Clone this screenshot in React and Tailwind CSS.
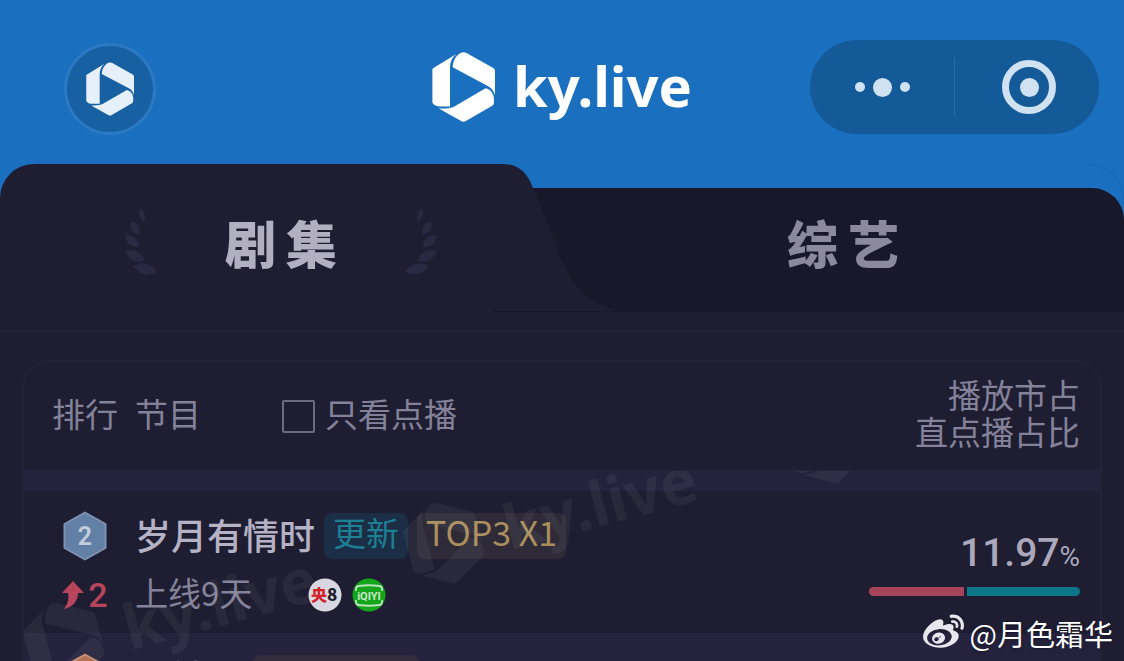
import { useState } from 'react';
import { FaWeibo } from 'react-icons/fa';

const shows = [
  {
    rank: 2,
    title: '岁月有情时',
    tags: [
      { text: '更新', style: 'bg-[#1c2d46] text-[33px] text-[#1d7f92]' },
      { text: 'TOP3 X1', style: 'bg-[#2e2a38] text-[34px] text-[#a98d5c]' },
    ],
    change: 2,
    days: '上线9天',
    share: '11.97',
    live: 45,
  },
  {
    rank: 3,
    title: '六姊妹',
    tags: [{ text: 'TOP1 X12', style: 'bg-[#322c3b] text-[34px] text-[#a98d5c]' }],
    change: 1,
    days: '上线8天',
    share: '10.02',
    live: 60,
  },
];

const LogoMark = ({ className }) => (
  <svg viewBox="0 0 186 207" className={className} fill="currentColor" aria-hidden="true">
    <path d="M4 47 L72 6 C60 15 54 28 53 44 V161 H24 C14 161 6 158 1 150 V52 Q1 49 4 47Z" />
    <path d="M84 3 Q93 -2 102 3 L181 47 Q186 50 186 56 V128 C183 115 177 107 166 101 L61 45 C62 27 70 11 84 3Z" />
    <path d="M158 107 C173 110 182 122 183 138 V150 Q183 156 178 159 L100 204 Q93 208 86 204 L20 167 C42 168 56 166 66 161Z" />
  </svg>
);

const Laurel = ({ className }) => (
  <svg viewBox="0 0 32 68" className={className} fill="#2a2943" aria-hidden="true">
    <path d="M0 -7 Q6 0 0 7 Q-6 0 0 -7Z" transform="translate(18 7) rotate(-16)" />
    <path d="M0 -8 Q8 0 0 8 Q-8 0 0 -8Z" transform="translate(11 20) rotate(-32)" />
    <path d="M0 -9 Q9 0 0 9 Q-9 0 0 -9Z" transform="translate(8 33) rotate(-52)" />
    <path d="M0 -11 Q10 0 0 11 Q-10 0 0 -11Z" transform="translate(11 48) rotate(-64)" />
    <path d="M0 -12 Q11 0 0 12 Q-11 0 0 -12Z" transform="translate(21 61) rotate(-76)" />
  </svg>
);

const TabTitle = ({ text }) => (
  <span className="flex gap-2.5 text-[51px] leading-[60px] font-black">
    {text.split('').map((c) => (
      <span key={c}>{c}</span>
    ))}
  </span>
);

const RankBadge = ({ rank }) => (
  <svg viewBox="0 0 44 50" className="mx-auto h-[50px] w-11" role="img" aria-label={`第${rank}名`}>
    <path
      d="M22 1.5 L42.5 13 V37 L22 48.5 L1.5 37 V13Z"
      fill={rank === 2 ? '#627fa6' : '#b0694a'}
      stroke={rank === 2 ? '#7f92b2' : '#c08a70'}
      strokeWidth="2"
      strokeLinejoin="round"
    />
    <text x="22" y="34" textAnchor="middle" fontSize="25" fontWeight="600" fill="#c3cddd" className="font-['Roboto',sans-serif]">
      {rank}
    </text>
  </svg>
);

const Watermark = ({ className }) => (
  <div className={`absolute flex origin-left -rotate-15 items-center gap-6 text-white/5 ${className}`}>
    <LogoMark className="h-[84px] w-[75px]" />
    <span className="font-['Noto_Sans',sans-serif] text-[62px] leading-[84px] font-bold">ky.live</span>
  </div>
);

const Channels = () => (
  <span className="flex gap-2.5">
    <svg viewBox="0 0 34 34" className="size-[34px]" role="img" aria-label="央8">
      <circle cx="17" cy="17" r="16.5" fill="#d9d7e0" />
      <text x="3" y="23" fontSize="16" fontWeight="900" fill="#d2232c">央</text>
      <text x="19" y="23" fontSize="17" fontWeight="900" fill="#211f2c">8</text>
    </svg>
    <svg viewBox="0 0 34 34" className="size-[34px]" role="img" aria-label="iQIYI">
      <circle cx="17" cy="17" r="16.5" fill="#14a51a" />
      <path d="M4 13 V11 Q4 8 7 8 Q17 6.5 27 8 Q30 8 30 11 V13 M4 22 V24 Q4 27 7 27 Q17 28.5 27 27 Q30 27 30 24 V22" fill="none" stroke="#b9e2bd" strokeWidth="1.8" />
      <text x="17" y="22" textAnchor="middle" fontSize="11" fontWeight="700" fill="#c9e8cc" className="font-['Roboto',sans-serif]">
        iQIYI
      </text>
    </svg>
  </span>
);

const ShowRow = ({ show, striped }) => (
  <tr className={striped ? 'bg-[#25223d] align-top' : 'align-top'}>
    <td className="pt-5 pb-5 pl-[11px]">
      <RankBadge rank={show.rank} />
      <div className="mt-4 flex items-center justify-center gap-1 font-['Roboto',sans-serif] text-[34px] leading-9 font-medium text-[#b8455c]">
        <svg viewBox="0 0 22 28" className="h-7 w-[22px]" fill="currentColor" aria-hidden="true">
          <path d="M11 0 L22 12 H16 C16 20 11 26 2 28 C6 23 7 18 6 12 H0Z" />
        </svg>
        {show.change}
      </div>
    </td>
    <td className="pt-[22px] pb-5">
      <div className="flex h-[46px] gap-[9px]">
        <span className="text-[36px] leading-[42px] font-medium whitespace-nowrap text-[#b4b2c4]">{show.title}</span>
        {show.tags.map((tag) => (
          <span key={tag.text} className={`h-[46px] rounded-lg px-[9px] leading-[38px] whitespace-nowrap ${tag.style}`}>
            {tag.text}
          </span>
        ))}
      </div>
      <div className="mt-[18px] flex h-9 items-center text-[33px] text-[#84829a]">
        <span className="w-[173px] pb-1.5 leading-9 whitespace-nowrap">{show.days}</span>
        <Channels />
      </div>
    </td>
    <td className="pt-10 pr-5">
      <div className="flex items-baseline justify-end font-['Roboto',sans-serif] text-[39px] leading-[44px] font-medium text-[#aaa8ba]">
        {show.share}
        <span className="text-[28px] font-normal">%</span>
      </div>
      <div className="mt-2 flex h-[9px] gap-[3px] overflow-hidden rounded-full">
        <span className="bg-[#a64459]" style={{ width: `${show.live}%` }} />
        <span className="flex-1 bg-[#0c7587]" />
      </div>
    </td>
  </tr>
);

const App = () => {
  const [tab, setTab] = useState('剧集');
  const [onDemand, setOnDemand] = useState(false);

  return (
    <div className="relative h-screen overflow-hidden bg-[#1f1d31] font-['Noto_Sans_CJK_SC',sans-serif]">
      <div className="bg-[#1a6fbf]">
        <header className="grid grid-cols-[1fr_auto_1fr] items-center pt-[39px] pb-[29px]">
          <button aria-label="首页" className="mt-1 ml-16 flex size-[92px] items-center justify-center rounded-full border-3 border-[#2a79c2] bg-[#1760a2] text-[#e6f0fa]">
            <LogoMark className="h-[54px] w-12" />
          </button>
          <div className="flex items-center gap-[18px] text-white">
            <LogoMark className="h-[70px] w-[63px]" />
            <span className="pb-1 font-['Noto_Sans',sans-serif] text-[56px] leading-[64px] font-bold">ky.live</span>
          </div>
          <div className="mr-[25px] flex h-[94px] w-[289px] items-center justify-self-end rounded-full bg-[#155a98] text-[#d0e1f2]">
            <button aria-label="更多" className="flex h-full w-36 items-center justify-center gap-2">
              <span className="size-2.5 rounded-full bg-current" />
              <span className="size-[19px] rounded-full bg-current" />
              <span className="size-2.5 rounded-full bg-current" />
            </button>
            <span className="h-[58px] w-px bg-[#2a6ba8]" />
            <button aria-label="关闭" className="flex h-full w-36 items-center justify-center pl-1">
              <span className="flex size-[54px] items-center justify-center rounded-full border-7 border-current">
                <span className="size-[19px] rounded-full bg-current" />
              </span>
            </button>
          </div>
        </header>

        <div className="relative">
          {/* tab shapes */}
          <div className="absolute inset-0 flex" aria-hidden="true">
            <span className="absolute top-0 right-0 size-9 rounded-tr-[36px] border-t border-r border-[#1967b2]" />
            <span className="flex-1 rounded-tl-[34px] bg-[#1f1d31]" />
            <svg viewBox="0 0 150 148" className="h-[148px] w-[150px]">
              <path d="M40 24 H150 V148 H40Z" fill="#19172a" />
              <path d="M0 0 H16 C32 0 41 10 46 24 L66 73 Q72 90 78 103 C90 129 112 145 140 148 H0Z" fill="#1f1d31" />
              <path d="M4 147.5 H150" stroke="#19172a" />
            </svg>
            <span className="relative mt-6 flex-1 rounded-tr-[32px] bg-[#19172a]" />
          </div>
          <div role="tablist" className="relative grid h-[148px] grid-cols-2">
            <button role="tab" aria-selected={tab === '剧集'} onClick={() => setTab('剧集')} className="flex items-center justify-center gap-[69px] pt-2 text-[#b1afc0]">
              <Laurel className="h-[68px] w-8" />
              <TabTitle text="剧集" />
              <Laurel className="h-[68px] w-8 -scale-x-100" />
            </button>
            <button role="tab" aria-selected={tab === '综艺'} onClick={() => setTab('综艺')} className="flex items-center justify-center pt-2 text-[#8b899b]">
              <TabTitle text="综艺" />
            </button>
          </div>
        </div>
      </div>

      <main className="mt-[18px] border-t-2 border-[#242238] px-[22px] pt-7">
        <div className="relative overflow-hidden rounded-t-[28px] border-2 border-[#242238]">
          <table className="w-full border-collapse">
            <thead>
              <tr className="h-[108px] text-[33px] leading-9 text-[#84829a]">
                <th scope="col" className="w-[111px] pb-1.5 pl-[11px] text-center font-normal">排行</th>
                <th scope="col" className="text-left font-normal">
                  <div className="flex items-center">
                    <span className="mr-[81px] pb-1.5">节目</span>
                    <label className="flex items-center gap-2.5">
                      <input
                        type="checkbox"
                        checked={onDemand}
                        onChange={(e) => setOnDemand(e.target.checked)}
                        className="size-[33px] appearance-none rounded-xs border-2 border-[#6d6b80] checked:bg-[#6d6b80]"
                      />
                      <span className="pb-1.5">只看点播</span>
                    </label>
                  </div>
                </th>
                <th scope="col" className="w-[231px] pr-5 pb-1.5 text-right leading-[37px] font-normal">
                  播放市占
                  <br />
                  直点播占比
                </th>
              </tr>
            </thead>
            <tbody>
              <tr className="h-[21px] bg-[#25223d]" aria-hidden="true">
                <td colSpan="3" />
              </tr>
              {shows.map((show, i) => (
                <ShowRow key={show.rank} show={show} striped={i % 2 === 1} />
              ))}
            </tbody>
          </table>
          <div className="pointer-events-none absolute inset-x-0 top-[109px] bottom-0 overflow-hidden" aria-hidden="true">
            <Watermark className="top-[140px] left-1" />
            <Watermark className="top-[40px] left-[384px]" />
            <LogoMark className="absolute -top-[70px] left-[765px] h-[84px] w-[75px] -rotate-15 text-white/5" />
          </div>
        </div>
      </main>

      <div className="absolute right-[11px] bottom-2 flex items-center gap-1.5 text-[29px] leading-9 text-white text-shadow-md">
        <FaWeibo className="size-[41px] text-[#e8e6ec]" />
        @月色霜华
      </div>
    </div>
  );
};

export default App;
